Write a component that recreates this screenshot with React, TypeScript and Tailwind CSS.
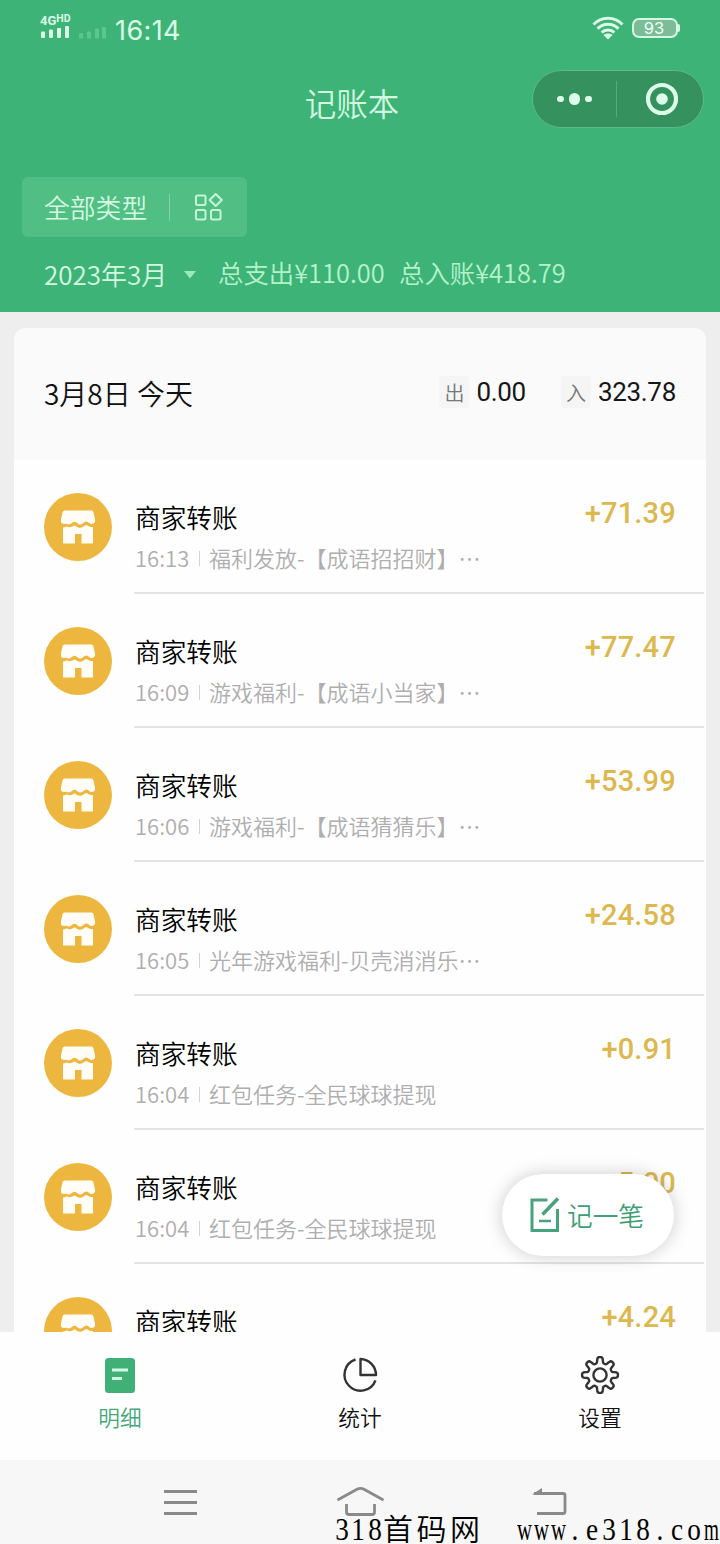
import React from "react";

const CJK = "font-['Noto_Sans_CJK_SC_DemiLight','Noto_Sans_CJK_SC',sans-serif]";

const rows = [
  { time: "16:13", note: "福利发放-【成语招招财】", more: true, amount: "71.39" },
  { time: "16:09", note: "游戏福利-【成语小当家】", more: true, amount: "77.47" },
  { time: "16:06", note: "游戏福利-【成语猜猜乐】", more: true, amount: "53.99" },
  { time: "16:05", note: "光年游戏福利-贝壳消消乐", more: true, amount: "24.58" },
  { time: "16:04", note: "红包任务-全民球球提现", more: false, amount: "0.91" },
  { time: "16:04", note: "红包任务-全民球球提现", more: false, amount: "5.00" },
  { time: "", note: "", more: false, amount: "4.24" },
];

function SignalIcon() {
  return (
    <div className="flex w-[32px] flex-col">
      <div className="flex h-[12px] items-start font-['Roboto',sans-serif] font-bold whitespace-nowrap text-[#dcfbe6]">
        <span className="text-[13px] leading-[13px]">4G</span>
        <span className="text-[10.500px] leading-[9px]">HD</span>
      </div>
      <svg width="30" height="13" viewBox="0 0 30 13" fill="#dcfbe6">
        <rect x="1" y="5.500" width="4" height="6.500" rx="1" />
        <rect x="9" y="3.500" width="4" height="8.500" rx="1" />
        <rect x="17" y="2" width="4" height="10" rx="1" />
        <rect x="25" y="0" width="4" height="12" rx="1" />
      </svg>
    </div>
  );
}

function StatusBar() {
  return (
    <div className="flex h-[60px] items-start pt-[14px] pl-10 pr-[40px]">
      <SignalIcon />
      <svg className="mt-[12px] ml-[6px]" width="30" height="14" viewBox="0 0 30 14" fill="#5cc78c">
        <rect x="1" y="7" width="4" height="5.500" rx="1" />
        <rect x="9" y="5.500" width="4" height="7" rx="1" />
        <rect x="17" y="2.500" width="4" height="10" rx="1" />
        <rect x="24" y="1" width="4" height="11.500" rx="1" />
      </svg>
      <span className="mt-px ml-[7px] font-['Inter',sans-serif] text-[27px] leading-[32px] tracking-[0.4px] text-[#dcfbe6]">16:14</span>
      <svg className="mt-[2px] ml-auto" width="32" height="24" viewBox="0 0 32 24" fill="none" stroke="#dcfbe6" strokeWidth="3">
        <path d="M1.500 8.500C9.500 0.300 22.500 0.300 30.500 8.500" />
        <path d="M5.500 12.600C11.500 6.700 20.500 6.700 26.500 12.600" />
        <path d="M9.600 16.500C13.300 13 18.700 13 22.400 16.500" />
        <path d="M16 23.500L11.500 19C14 17 18 17 20.500 19Z" fill="#dcfbe6" stroke="none" />
      </svg>
      <div className="mt-[4px] ml-2 flex items-center">
        <div className="flex h-5 w-[46px] items-center justify-center rounded-[7px] border-2 border-[#d4f8e0] bg-[#7cbc98] pr-[2px] font-['Inter',sans-serif] text-[16.500px] leading-none text-[#f2fff6]">
          93
        </div>
        <div className="h-2 w-[2px] rounded-r-sm bg-[#d4f8e0]" />
      </div>
    </div>
  );
}

function Header() {
  return (
    <header className="h-[312px] shrink-0 bg-[#3eb377]">
      <StatusBar />
      <div className="grid h-[84px] grid-cols-[1fr_auto_1fr] pt-[10px] pr-4">
        <div />
        <h1 className={`${CJK} col-start-2 pt-[9px] text-[31.500px] leading-[46px] font-[350] text-[#d3f9e0]`}>记账本</h1>
        <div className="flex h-[58px] w-[172px] items-center justify-self-end rounded-full border border-[#5cba88] bg-[#35915e]">
          <div className="flex flex-1 items-center justify-center gap-[5px]">
            <span className="size-[6.500px] rounded-full bg-[#dcffe9]" />
            <span className="size-[11.500px] rounded-full bg-[#dcffe9]" />
            <span className="size-[6.500px] rounded-full bg-[#dcffe9]" />
          </div>
          <div className="h-9 w-px bg-[#56aa7c]" />
          <div className="flex flex-1 justify-center pl-[4px]">
            <svg width="34" height="34" viewBox="0 0 34 34">
              <circle cx="17" cy="17" r="14" fill="none" stroke="#dcffe9" strokeWidth="4.200" />
              <circle cx="17" cy="17" r="5.800" fill="#dcffe9" />
            </svg>
          </div>
        </div>
      </div>
      <div className="px-[22px] pt-[33px]">
        <div className="flex h-[60px] w-[225px] items-center rounded-[6px] bg-[#51be84] pl-[22px]">
          <span className={`${CJK} -mt-px text-[25.800px] leading-[38px] font-[350] text-[#d3f9e0]`}>全部类型</span>
          <div className="ml-[22px] h-[27px] w-px bg-[#7fd3a5]" />
          <svg className="-mt-[2px] ml-[23px]" width="30" height="30" viewBox="0 0 30 30" fill="none" stroke="#c5f5d8" strokeWidth="2">
            <rect x="3" y="4.500" width="9.500" height="9.500" rx="1.500" />
            <rect x="3" y="19" width="9.500" height="9.500" rx="1.500" />
            <rect x="18" y="19" width="9.500" height="9.500" rx="1.500" />
            <path d="M22.700 3L28.800 9L22.700 15L16.600 9Z" strokeLinejoin="round" />
          </svg>
        </div>
      </div>
      <div className={`${CJK} flex pt-[17px] pl-11 leading-[38px] font-[350]`}>
        <span className="w-[123px] pt-px text-[26px] whitespace-nowrap text-[#d3f9e0]">2023年3月</span>
        <svg className="mt-[17px] ml-[17px]" width="12" height="8" viewBox="0 0 12 8" fill="#9beabc">
          <path d="M0 0H12L6 7.500Z" />
        </svg>
        <span className="ml-[22px] w-[181px] text-[25.400px] leading-[37px] whitespace-nowrap text-[#b5f2cb]">总支出¥110.00</span>
        <span className="text-[25.400px] leading-[37px] whitespace-nowrap text-[#b5f2cb]">总入账¥418.79</span>
      </div>
    </header>
  );
}

function ShopIcon() {
  return (
    <svg className="shrink-0" width="68" height="68" viewBox="0 0 68 68">
      <circle cx="34" cy="34" r="34" fill="#edb63e" />
      <g fill="#fffdf6">
        <path d="M20.500 17.500H47.500Q49 17.500 49.300 19L51 26V29Q50 31.500 46.500 31Q44 28 42 28.500Q40 29 38 31Q35.500 32.500 33 30Q30.500 27.500 28 30Q25 32.500 22 30.500Q19.500 32 17 29.500V26L18.700 19Q19 17.500 20.500 17.500Z" />
        <path d="M19 34.500Q21 34.500 22.500 33.200Q26.500 35.500 30 32.500Q31 32 32.500 33.500Q36 36 39.500 33.500Q42 31 43.500 32.500Q46 34.500 49 34V50.500H37.500V41H31V50.500H19Z" />
      </g>
    </svg>
  );
}

function Row({ time, note, more, amount }: (typeof rows)[number]) {
  return (
    <li className="flex h-[134px] shrink-0 pt-[33px] pl-[30px]">
      <ShopIcon />
      <div className="ml-[22px] flex h-[101px] w-[570px] border-b-2 border-[#e3e3e3] pl-px">
        <div className={`${CJK} flex-1 font-[350]`}>
          <div className="pt-[5px] text-[25.700px] leading-[38px] text-black">商家转账</div>
          {time && (
            <div className="flex items-center pt-[5px] text-[22px] leading-[32px] whitespace-nowrap text-[#aeaeae]">
              <span className="w-[54px]">{time}</span>
              <span className="mt-[2px] ml-[10px] h-[15px] w-px bg-[#d2d2d2]" />
              <span className="ml-[9px]">{note}</span>
              {more && <span>⋯</span>}
            </div>
          )}
        </div>
        <div className="pt-[1px] pr-[28px] font-['Roboto',sans-serif] text-[29px] leading-[38px] font-medium tracking-[0.2px] text-[#ddb84f]">+{amount}</div>
      </div>
    </li>
  );
}

function Total({ label, value }: { label: string; value: string }) {
  return (
    <div className="flex items-center">
      <span className={`${CJK} flex h-[32px] w-[30px] items-center justify-center rounded bg-[#f5f5f5] pt-[2px] text-[20px] font-[350] text-[#777]`}>{label}</span>
      <span className="ml-[7px] font-['Roboto',sans-serif] text-[26px] leading-[34px] tracking-[-0.300px] text-[#161616]">{value}</span>
    </div>
  );
}

function AddButton() {
  return (
    <button className="absolute top-[862px] left-[502px] flex h-[82px] w-[172px] items-center rounded-full bg-white pl-[26px] shadow-[0_0_18px_rgba(0,0,0,0.2)]">
      <svg width="32" height="38" viewBox="0 0 32 38" fill="none" stroke="#48a37d" strokeWidth="3">
        <path d="M19.500 4H4V34.500H29.500V13" />
        <path d="M30 2.500L14.500 18.500" strokeWidth="3.500" />
        <path d="M11 25H23" strokeWidth="2.500" />
      </svg>
      <span className={`${CJK} ml-[7px] text-[25.700px] leading-[38px] font-[350] whitespace-nowrap text-[#3f9f74]`}>记一笔</span>
    </button>
  );
}

function gearPath() {
  const pts: string[] = [];
  const n = 8;
  for (let i = 0; i <= 160; i++) {
    const a = (i / 160) * Math.PI * 2 - Math.PI / 2;
    const c = Math.cos(n * (a + Math.PI / 2));
    const r = 15 + 3 * Math.tanh(2.2 * (c - 0.05));
    pts.push(`${(20 + r * Math.cos(a)).toFixed(2)} ${(20 + r * Math.sin(a)).toFixed(2)}`);
  }
  return `M${pts.join("L")}Z`;
}

function TabBar() {
  return (
    <nav className={`${CJK} grid h-[128px] shrink-0 grid-cols-3 bg-[#fefefe] text-[21.700px] leading-[32px] font-[350]`}>
      <div className="flex flex-col items-center pt-[23px] text-[#45a87a]">
        <svg width="40" height="40" viewBox="0 0 40 40">
          <rect x="5" y="3" width="30" height="35" rx="3.500" fill="#41b077" />
          <path d="M12 15H28M12 23.500H22" stroke="#d2fae2" strokeWidth="3" />
        </svg>
        <span className="pt-[6px]">明细</span>
      </div>
      <div className="flex flex-col items-center pt-[23px] text-[#111]">
        <svg width="40" height="40" viewBox="0 0 40 40" fill="none" stroke="#333" strokeWidth="2.400">
          <path d="M15.500 4.500A16 16 0 1 0 35.500 25.300" />
          <path d="M20.500 4V20H36A16 16 0 0 0 20.500 4Z" strokeLinejoin="round" />
        </svg>
        <span className="pt-[6px]">统计</span>
      </div>
      <div className="flex flex-col items-center pt-[23px] text-[#111]">
        <svg width="40" height="40" viewBox="0 0 40 40" fill="none" stroke="#333" strokeWidth="2.400" strokeLinejoin="round">
          <path d={gearPath()} />
          <circle cx="20" cy="20" r="6.600" />
        </svg>
        <span className="pt-[6px]">设置</span>
      </div>
    </nav>
  );
}

function SystemNav() {
  return (
    <footer className="relative h-[84px] shrink-0 bg-[#f7f7f7]">
      <div className="flex pt-[24px] pl-[163px]">
        <svg width="35" height="36" viewBox="0 0 35 36" fill="none" stroke="#8a8a8a" strokeWidth="2.800">
          <path d="M1 7.500H34M1 18.500H34M1 29.500H34" />
        </svg>
        <svg className="ml-[138px]" width="50" height="36" viewBox="0 0 50 36" fill="none" stroke="#8a8a8a" strokeWidth="2.800" strokeLinecap="round">
          <path d="M2.500 15.500L21 5.200Q24.500 3.500 28 5.200L46.500 15.500" />
          <path d="M10.500 20V28Q10.500 30.500 13 30.500H36Q38.500 30.500 38.500 28V20" strokeLinecap="butt" />
        </svg>
        <svg className="ml-[145px]" width="38" height="36" viewBox="0 0 38 36" fill="none" stroke="#8a8a8a" strokeWidth="2.800">
          <path d="M3 9.500H32Q34 9.500 34 11.500V27.500Q34 29.500 32 29.500H6" />
          <path d="M1 10.500L11 4V10.500Z" fill="#8a8a8a" stroke="none" />
        </svg>
      </div>
      <div className="absolute top-[50px] left-[334px] flex h-[38px] font-['Liberation_Serif',serif] text-[32px] leading-[38px] whitespace-nowrap text-black">
        {"318".split("").map((ch, i) => (
          <span key={i} className="flex w-[16.300px] justify-center">
            <span className="scale-x-85">{ch}</span>
          </span>
        ))}
        <span className={`${CJK} w-[133px] text-[30px] leading-[34px] font-light tracking-[3.500px]`}>首码网</span>
        {"www.e318.com".split("").map((ch, i) => (
          <span key={i} className="flex w-[17px] justify-center">
            <span className={ch === "w" ? "scale-x-65" : ch === "m" ? "scale-x-60" : "scale-x-85"}>{ch}</span>
          </span>
        ))}
      </div>
    </footer>
  );
}

export default function App() {
  return (
    <div className="flex h-[1544px] w-[720px] flex-col overflow-hidden bg-[#eeeeee]">
      <Header />
      <main className="relative h-[1020px] shrink-0 overflow-hidden pt-4 pr-[14px] pl-[14px]">
        <section className="flex flex-col rounded-t-[12px] bg-[#fefefe]">
          <div className="flex h-[132px] shrink-0 rounded-t-[12px] bg-[#fafafa] pt-[47px] pr-[30px] pl-[30px]">
            <span className={`${CJK} -mt-px text-[28px] leading-[38px] font-[350] whitespace-pre text-[#111]`}>3月8日 今天</span>
            <div className="ml-auto flex h-[34px] items-center gap-[35px]">
              <Total label="出" value="0.00" />
              <Total label="入" value="323.78" />
            </div>
          </div>
          <ul className="flex flex-col">
            {rows.map((row, i) => (
              <Row key={i} {...row} />
            ))}
          </ul>
        </section>
        <AddButton />
      </main>
      <TabBar />
      <SystemNav />
    </div>
  );
}
